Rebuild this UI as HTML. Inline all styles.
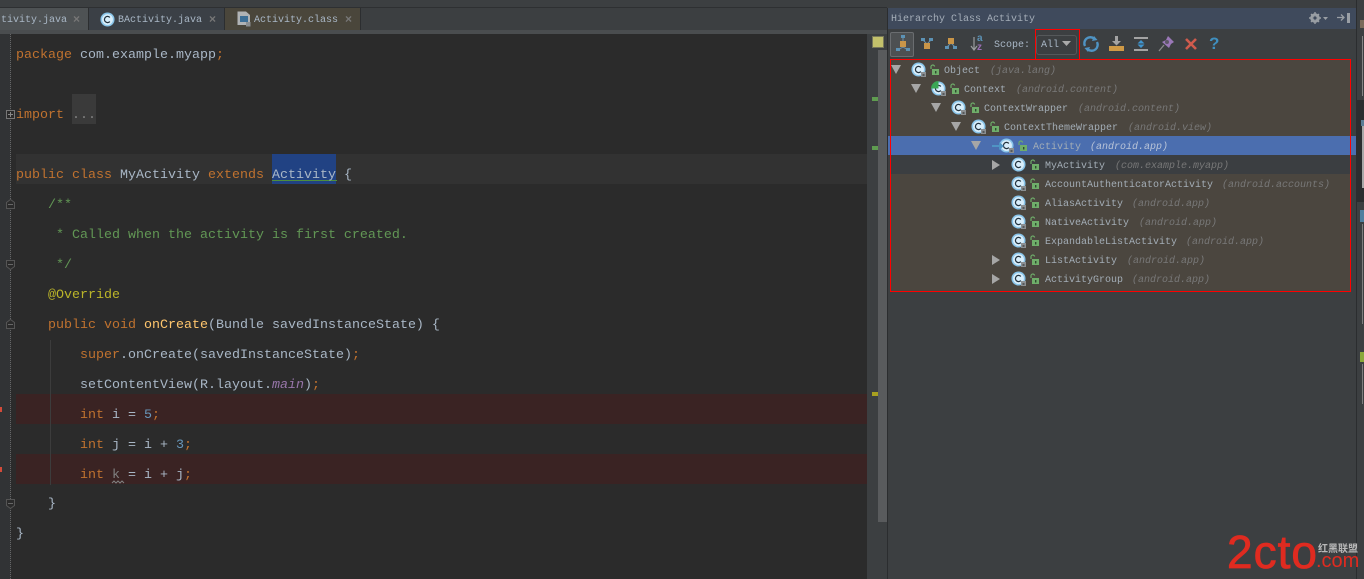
<!DOCTYPE html>
<html><head><meta charset="utf-8"><style>
html,body{margin:0;padding:0;background:#3c3f41}
#p{position:relative;width:1364px;height:579px;overflow:hidden;background:#3c3f41;font-family:"Liberation Mono",monospace}
#p div{position:absolute}
.l{left:16px;height:30px;line-height:30px;font-size:13.33px;color:#a9b7c6;white-space:pre}
.k{color:#c0722f}.g{color:#629755}.y{color:#bbb529}.f{color:#ffc66d}.n{color:#6897bb}.m{color:#9876aa;font-style:italic}
.t{height:19px;line-height:19px;font-size:10px;color:#a3adb6;white-space:pre}
.t i{color:#787878}
.tab{font-size:10px;line-height:16px;color:#a9b7c6;white-space:pre}
.x{font:bold 12px/16px "Liberation Sans",sans-serif;color:#777}
svg{position:absolute;overflow:visible}
</style></head><body><div id="p">
<svg width="0" height="0" style="position:absolute"><defs>
<symbol id="c" viewBox="0 0 16 16" overflow="visible"><circle cx="8" cy="8" r="7.5" fill="#8ac5ea"/><circle cx="8" cy="8" r="5.8" fill="#d8eefb"/><path d="M10.5 5.8A3.300 3.300 0 1 0 10.500 10.200" fill="none" stroke="#23333f" stroke-width="1.300"/></symbol>
<symbol id="lk" viewBox="0 0 9 10" overflow="visible"><rect x="2" y="4" width="7" height="6" fill="#6fae6a"/><path d="M1 4V2.200A1.800 1.800 0 0 1 4.600 1.500" fill="none" stroke="#6fae6a" stroke-width="1.200"/><rect x="5" y="6" width="1.400" height="2.500" fill="#2e4a2e"/></symbol>
<symbol id="bd" viewBox="0 0 5 5"><rect width="5" height="5" fill="#8b8f92"/><rect x="1.500" y="2" width="2" height="2" fill="#55585a"/></symbol>
</defs></svg>

<!-- tab bar -->
<div style="left:0;top:0;width:1364px;height:8px;background:#3c3f41"></div>
<div style="left:0;top:7px;width:887px;height:1px;background:#2e3032"></div>
<div style="left:0;top:8px;width:887px;height:23px;background:#3c3f41"></div>
<div style="left:0;top:8px;width:88px;height:23px;background:#4e5254"></div>
<div style="left:88px;top:8px;width:1px;height:23px;background:#2c2e30"></div>
<div style="left:89px;top:8px;width:135px;height:22px;background:#3b4046"></div>
<div style="left:224px;top:8px;width:1px;height:23px;background:#2c2e30"></div>
<div style="left:225px;top:8px;width:135px;height:22px;background:#4a463b"></div>
<div style="left:360px;top:8px;width:1px;height:23px;background:#2c2e30"></div>
<div style="left:0;top:30px;width:887px;height:4px;background:#4a4d4f"></div>
<div class="tab" style="left:-6px;top:13px;text-align:right;width:73px">tivity.java</div>
<div class="x" style="left:73px;top:11px">×</div>
<svg style="left:100px;top:12px" width="15" height="15"><use href="#c" width="15" height="15"/></svg>
<div class="tab" style="left:118px;top:13px">BActivity.java</div>
<div class="x" style="left:209px;top:11px">×</div>
<svg style="left:237px;top:11px" width="14" height="16"><path d="M.5.5H9L13 4V14H.5Z" fill="#b0b3b5"/><rect x="3" y="5" width="8" height="6" fill="#3d6f96"/><rect x="9" y="11" width="4.500" height="4.500" fill="#8b8f92"/></svg>
<div class="tab" style="left:254px;top:13px">Activity.class</div>
<div class="x" style="left:345px;top:11px">×</div>

<!-- editor -->
<div style="left:0;top:34px;width:867px;height:545px;background:#2b2b2b"></div>
<div style="left:0;top:34px;width:11px;height:545px;background:#313335"></div>
<div style="left:10px;top:34px;width:0;height:545px;border-left:1px dotted #666"></div>
<div style="left:16px;top:154px;width:851px;height:30px;background:#323232"></div>
<div style="left:16px;top:394px;width:851px;height:30px;background:#3a2323"></div>
<div style="left:16px;top:454px;width:851px;height:30px;background:#3a2323"></div>
<div style="left:72px;top:94px;width:24px;height:30px;background:#3a3a3a"></div>
<div style="left:272px;top:154px;width:64px;height:30px;background:#214283"></div>
<div style="left:272px;top:180px;width:65px;height:1px;background:#4f8f3c"></div>
<div style="left:50px;top:340px;width:1px;height:145px;background:#3c3c3c"></div>
<div style="left:0;top:407px;width:2px;height:5px;background:#d24b3a"></div>
<div style="left:0;top:467px;width:2px;height:5px;background:#d24b3a"></div>

<svg style="left:6px;top:110px" width="9" height="9"><rect x=".5" y=".5" width="8" height="8" fill="#2b2b2b" stroke="#777"/><path d="M2 4.500H7M4.500 2V7" stroke="#888"/></svg>
<svg style="left:6px;top:199px" width="9" height="10"><path d="M.5 9.500V3.500L4.500 .5L8.500 3.500V9.500Z" fill="#2b2b2b" stroke="#555"/><path d="M2 5.500H7" stroke="#666"/></svg>
<svg style="left:6px;top:260px" width="9" height="10"><path d="M.5 .5V6.500L4.500 9.500L8.500 6.500V.5Z" fill="#2b2b2b" stroke="#555"/><path d="M2 4.500H7" stroke="#666"/></svg>
<svg style="left:6px;top:319px" width="9" height="10"><path d="M.5 9.500V3.500L4.500 .5L8.500 3.500V9.500Z" fill="#2b2b2b" stroke="#555"/><path d="M2 5.500H7" stroke="#666"/></svg>
<svg style="left:6px;top:499px" width="9" height="10"><path d="M.5 .5V6.500L4.500 9.500L8.500 6.500V.5Z" fill="#2b2b2b" stroke="#555"/><path d="M2 4.500H7" stroke="#666"/></svg>

<div class="l" style="top:41px"><span class="k">package</span> com.example.myapp<span class="k">;</span></div>
<div class="l" style="top:101px"><span class="k">import</span> <span style="color:#808080">...</span></div>
<div class="l" style="top:161px"><span class="k">public class</span> MyActivity <span class="k">extends</span> Activity {</div>
<div class="l g" style="top:191px;left:48px">/**</div>
<div class="l g" style="top:221px;left:56px">* Called when the activity is first created.</div>
<div class="l g" style="top:251px;left:56px">*/</div>
<div class="l y" style="top:281px;left:48px">@Override</div>
<div class="l" style="top:311px;left:48px"><span class="k">public void</span> <span class="f">onCreate</span>(Bundle savedInstanceState) {</div>
<div class="l" style="top:341px;left:80px"><span class="k">super</span>.onCreate(savedInstanceState)<span class="k">;</span></div>
<div class="l" style="top:371px;left:80px">setContentView(R.layout.<span class="m">main</span>)<span class="k">;</span></div>
<div class="l" style="top:401px;left:80px"><span class="k">int</span> i = <span class="n">5</span><span class="k">;</span></div>
<div class="l" style="top:431px;left:80px"><span class="k">int</span> j = i + <span class="n">3</span><span class="k">;</span></div>
<div class="l" style="top:461px;left:80px"><span class="k">int</span> <span style="color:#808080">k</span> = i + j<span class="k">;</span></div>
<svg style="left:112px;top:480px" width="12" height="4"><path d="M0 3L2 1L4 3L6 1L8 3L10 1L12 3" fill="none" stroke="#808080"/></svg>
<div class="l" style="top:490px;left:48px">}</div>
<div class="l" style="top:520px">}</div>

<!-- error stripe -->
<div style="left:867px;top:34px;width:20px;height:545px;background:#3c3f41"></div>
<div style="left:872px;top:36px;width:12px;height:12px;background:#c3c16b;outline:1px solid #77775a;outline-offset:-1px"></div>
<div style="left:878px;top:50px;width:9px;height:472px;background:#595b5d"></div>
<div style="left:872px;top:97px;width:6px;height:4px;background:#5f9c50"></div>
<div style="left:872px;top:146px;width:6px;height:4px;background:#5f9c50"></div>
<div style="left:872px;top:392px;width:6px;height:4px;background:#a8a020"></div>
<div style="left:887px;top:8px;width:1px;height:571px;background:#2b2d2f"></div>

<!-- panel header -->
<div style="left:888px;top:8px;width:468px;height:21px;background:#3f4a5c"></div>
<div class="tab" style="left:891px;top:12px;color:#a4adb8">Hierarchy Class Activity</div>
<svg style="left:1309px;top:12px" width="20" height="12"><circle cx="6" cy="6" r="3.600" fill="none" stroke="#9a9fa5" stroke-width="2.400"/><path d="M6 0V12M0 6H12M2 2L10 10M10 2L2 10" stroke="#9a9fa5" stroke-width="1.400"/><circle cx="6" cy="6" r="1.600" fill="#3f4a5c"/><path d="M14 5H19L16.500 8Z" fill="#9a9fa5"/></svg>
<svg style="left:1337px;top:12px" width="14" height="12"><path d="M0 5.500H6M4 2.500L7 5.500L4 8.500" fill="none" stroke="#9a9fa5" stroke-width="1.300"/><rect x="10" y="1" width="3" height="10" fill="#9a9fa5"/></svg>

<!-- toolbar -->
<div style="left:890px;top:32px;width:22px;height:23px;background:#4d5052;border:1px solid #6a6d70;border-radius:2px"></div>
<svg style="left:896px;top:35px" width="16" height="18"><path d="M7 0V6M7 12L2 15M7 12L12 15" stroke="#6d8fa5" stroke-width="1"/><rect x="5" y="0" width="4" height="3" fill="#5c92b5"/><rect x="4" y="6" width="6" height="6" fill="#c99548"/><rect x="0" y="13" width="4" height="3" fill="#5c92b5"/><rect x="10" y="13" width="4" height="3" fill="#5c92b5"/></svg>
<svg style="left:921px;top:38px" width="13" height="13"><path d="M2 2L6 6M10 2L6 6" stroke="#6d8fa5"/><rect x="0" y="0" width="4" height="3" fill="#5c92b5"/><rect x="8" y="0" width="4" height="3" fill="#5c92b5"/><rect x="3" y="5" width="6" height="6" fill="#c99548"/></svg>
<svg style="left:945px;top:38px" width="13" height="13"><path d="M2 9L6 5M10 9L6 5" stroke="#6d8fa5"/><rect x="3" y="0" width="6" height="6" fill="#c99548"/><rect x="0" y="8" width="4" height="3" fill="#5c92b5"/><rect x="8" y="8" width="4" height="3" fill="#5c92b5"/></svg>
<svg style="left:970px;top:36px" width="8" height="16"><path d="M4 1V14M1 10L4 14L7 10" fill="none" stroke="#9a9c9e" stroke-width="1.200"/></svg>
<div style="left:977px;top:34px;font-size:10px;line-height:10px;color:#5c92b5;font-family:'Liberation Sans',sans-serif;font-weight:bold">a</div>
<div style="left:977px;top:43px;font-size:10px;line-height:10px;color:#9a6fb5;font-family:'Liberation Sans',sans-serif;font-weight:bold">z</div>
<div class="tab" style="left:994px;top:38px">Scope:</div>
<div style="left:1036px;top:35px;width:39px;height:18px;border:1px solid #55585a;border-radius:3px;background:#3c3f41"></div>
<div class="tab" style="left:1041px;top:38px">All</div>
<svg style="left:1062px;top:41px" width="9" height="6"><path d="M0 0H9L4.500 5Z" fill="#aaa"/></svg>

<svg style="left:1083px;top:36px" width="16" height="16"><path d="M2 10A6 6 0 0 1 11 2.500M14 6A6 6 0 0 1 5 13.500" fill="none" stroke="#4f94c4" stroke-width="2.400"/><path d="M11 0L14.500 4L9 5ZM5 16L1.500 12L7 11Z" fill="#4f94c4"/></svg>
<svg style="left:1109px;top:36px" width="15" height="15"><path d="M6 0H9V5H12L7.500 9.500L3 5H6Z" fill="#a3a3a3"/><path d="M0 10H15V15H0Z" fill="#cf9a46"/></svg>
<svg style="left:1134px;top:37px" width="14" height="14"><rect width="14" height="2" fill="#a3a3a3"/><rect y="12" width="14" height="2" fill="#a3a3a3"/><path d="M7 3L10.500 6.500H3.500ZM7 11L3.500 7.500H10.500Z" fill="#3f95d0"/></svg>
<svg style="left:1159px;top:36px" width="15" height="15"><path d="M0 15L5 9" stroke="#8a8a8a" stroke-width="1.300"/><path d="M9 0L15 6L12 8L10 12L3 6L7 4Z" fill="#9a78b8"/><circle cx="8" cy="6" r="2" fill="#5d5866"/></svg>
<svg style="left:1185px;top:38px" width="12" height="12"><path d="M1 1L11 11M11 1L1 11" stroke="#cf5b4d" stroke-width="2.600"/></svg>
<div style="left:1209px;top:35px;font:bold 17px/18px 'Liberation Sans',sans-serif;color:#3f8fbf">?</div>

<!-- tree -->
<div style="left:891px;top:60px;width:459px;height:231px;background:#4b463f"></div>
<div style="left:888px;top:136px;width:468px;height:19px;background:#4b6eaf"></div>
<div style="left:891px;top:155px;width:459px;height:19px;background:#3b3e41"></div>

<svg style="left:891px;top:65px" width="12" height="10"><path d="M0 0H10L5 9Z" fill="#a6a6a6"/></svg>
<svg style="left:911px;top:84px" width="12" height="10"><path d="M0 0H10L5 9Z" fill="#a6a6a6"/></svg>
<svg style="left:931px;top:103px" width="12" height="10"><path d="M0 0H10L5 9Z" fill="#a6a6a6"/></svg>
<svg style="left:951px;top:122px" width="12" height="10"><path d="M0 0H10L5 9Z" fill="#a6a6a6"/></svg>
<svg style="left:971px;top:141px" width="12" height="10"><path d="M0 0H10L5 9Z" fill="#a6a6a6"/></svg>
<svg style="left:992px;top:160px" width="9" height="10"><path d="M0 0L8 5L0 10Z" fill="#a6a6a6"/></svg>
<svg style="left:992px;top:255px" width="9" height="10"><path d="M0 0L8 5L0 10Z" fill="#a6a6a6"/></svg>
<svg style="left:992px;top:274px" width="9" height="10"><path d="M0 0L8 5L0 10Z" fill="#a6a6a6"/></svg>

<svg style="left:911px;top:62px" width="15" height="15"><use href="#c" width="15" height="15"/></svg><svg style="left:921px;top:72px" width="5" height="5"><use href="#bd" width="5" height="5"/></svg><svg style="left:930px;top:65px" width="9" height="10"><use href="#lk" width="9" height="10"/></svg>
<svg style="left:931px;top:81px" width="15" height="15"><use href="#c" width="15" height="15"/><path d="M7.500 7.500V0A7.500 7.500 0 0 1 15 7.500Z" fill="#3aa655" transform="rotate(-90 7.500 7.500)"/></svg><svg style="left:941px;top:91px" width="5" height="5"><use href="#bd" width="5" height="5"/></svg><svg style="left:950px;top:84px" width="9" height="10"><use href="#lk" width="9" height="10"/></svg>
<svg style="left:951px;top:100px" width="15" height="15"><use href="#c" width="15" height="15"/></svg><svg style="left:961px;top:110px" width="5" height="5"><use href="#bd" width="5" height="5"/></svg><svg style="left:970px;top:103px" width="9" height="10"><use href="#lk" width="9" height="10"/></svg>
<svg style="left:971px;top:119px" width="15" height="15"><use href="#c" width="15" height="15"/></svg><svg style="left:981px;top:129px" width="5" height="5"><use href="#bd" width="5" height="5"/></svg><svg style="left:990px;top:122px" width="9" height="10"><use href="#lk" width="9" height="10"/></svg>
<svg style="left:999px;top:138px" width="15" height="15"><use href="#c" width="15" height="15"/></svg><svg style="left:1009px;top:148px" width="5" height="5"><use href="#bd" width="5" height="5"/></svg><svg style="left:1018px;top:141px" width="9" height="10"><use href="#lk" width="9" height="10"/></svg>
<svg style="left:992px;top:142px" width="12" height="8"><path d="M0 3H7V0L12 4L7 8V5H0Z" fill="#4f94c4"/></svg>
<svg style="left:1011px;top:157px" width="15" height="15"><use href="#c" width="15" height="15"/></svg><svg style="left:1030px;top:160px" width="9" height="10"><use href="#lk" width="9" height="10"/></svg>
<svg style="left:1011px;top:176px" width="15" height="15"><use href="#c" width="15" height="15"/></svg><svg style="left:1021px;top:186px" width="5" height="5"><use href="#bd" width="5" height="5"/></svg><svg style="left:1030px;top:179px" width="9" height="10"><use href="#lk" width="9" height="10"/></svg>
<svg style="left:1011px;top:195px" width="15" height="15"><use href="#c" width="15" height="15"/></svg><svg style="left:1021px;top:205px" width="5" height="5"><use href="#bd" width="5" height="5"/></svg><svg style="left:1030px;top:198px" width="9" height="10"><use href="#lk" width="9" height="10"/></svg>
<svg style="left:1011px;top:214px" width="15" height="15"><use href="#c" width="15" height="15"/></svg><svg style="left:1021px;top:224px" width="5" height="5"><use href="#bd" width="5" height="5"/></svg><svg style="left:1030px;top:217px" width="9" height="10"><use href="#lk" width="9" height="10"/></svg>
<svg style="left:1011px;top:233px" width="15" height="15"><use href="#c" width="15" height="15"/></svg><svg style="left:1021px;top:243px" width="5" height="5"><use href="#bd" width="5" height="5"/></svg><svg style="left:1030px;top:236px" width="9" height="10"><use href="#lk" width="9" height="10"/></svg>
<svg style="left:1011px;top:252px" width="15" height="15"><use href="#c" width="15" height="15"/></svg><svg style="left:1021px;top:262px" width="5" height="5"><use href="#bd" width="5" height="5"/></svg><svg style="left:1030px;top:255px" width="9" height="10"><use href="#lk" width="9" height="10"/></svg>
<svg style="left:1011px;top:271px" width="15" height="15"><use href="#c" width="15" height="15"/></svg><svg style="left:1021px;top:281px" width="5" height="5"><use href="#bd" width="5" height="5"/></svg><svg style="left:1030px;top:274px" width="9" height="10"><use href="#lk" width="9" height="10"/></svg>

<div class="t" style="left:944px;top:62px">Object<i style="margin-left:10px">(java.lang)</i></div>
<div class="t" style="left:964px;top:81px">Context<i style="margin-left:10px">(android.content)</i></div>
<div class="t" style="left:984px;top:100px">ContextWrapper<i style="margin-left:10px">(android.content)</i></div>
<div class="t" style="left:1004px;top:119px">ContextThemeWrapper<i style="margin-left:10px">(android.view)</i></div>
<div class="t" style="left:1033px;top:138px">Activity<i style="margin-left:9px;color:#b9c4d8">(android.app)</i></div>
<div class="t" style="left:1045px;top:157px">MyActivity<i style="margin-left:10px">(com.example.myapp)</i></div>
<div class="t" style="left:1045px;top:176px">AccountAuthenticatorActivity<i style="margin-left:9px">(android.accounts)</i></div>
<div class="t" style="left:1045px;top:195px">AliasActivity<i style="margin-left:9px">(android.app)</i></div>
<div class="t" style="left:1045px;top:214px">NativeActivity<i style="margin-left:10px">(android.app)</i></div>
<div class="t" style="left:1045px;top:233px">ExpandableListActivity<i style="margin-left:9px">(android.app)</i></div>
<div class="t" style="left:1045px;top:252px">ListActivity<i style="margin-left:10px">(android.app)</i></div>
<div class="t" style="left:1045px;top:271px">ActivityGroup<i style="margin-left:9px">(android.app)</i></div>

<!-- red annotation boxes -->
<div style="left:890px;top:59px;width:459px;height:231px;border:1px solid #f00"></div>
<div style="left:1035px;top:29px;width:43px;height:30px;border:1px solid #f00;border-bottom:0"></div>

<!-- right sliver -->
<div style="left:1356px;top:0;width:1px;height:579px;background:#2b2d2f"></div>
<div style="left:1357px;top:100px;width:7px;height:102px;background:#2b2d2f"></div>
<div style="left:1360px;top:20px;width:4px;height:8px;background:#7a6a5a"></div>
<div style="left:1362px;top:36px;width:1px;height:60px;background:#858585"></div>
<div style="left:1362px;top:122px;width:2px;height:66px;background:#a8a8a8"></div>
<div style="left:1361px;top:120px;width:3px;height:6px;background:#5a7d95"></div>
<div style="left:1360px;top:210px;width:4px;height:12px;background:#4f7f9f"></div>
<div style="left:1362px;top:224px;width:1px;height:100px;background:#7e7e7e"></div>
<div style="left:1360px;top:352px;width:4px;height:10px;background:#8aa83a"></div>
<div style="left:1362px;top:364px;width:1px;height:40px;background:#7e7e7e"></div>

<!-- watermark -->
<div style="left:1227px;top:527px;font:46px/50px 'Liberation Sans',sans-serif;color:#e02b20;letter-spacing:1px;white-space:pre;-webkit-text-stroke:.8px #e02b20">2cto</div>
<div style="left:1316px;top:551px;font:20px/20px 'Liberation Sans',sans-serif;color:#e02b20;white-space:pre">.com</div>
<div style="left:1318px;top:542px;font:bold 10px/12px 'Noto Sans CJK SC',sans-serif;color:#b8b8b8;white-space:pre">红黑联盟</div>
</div></body></html>
